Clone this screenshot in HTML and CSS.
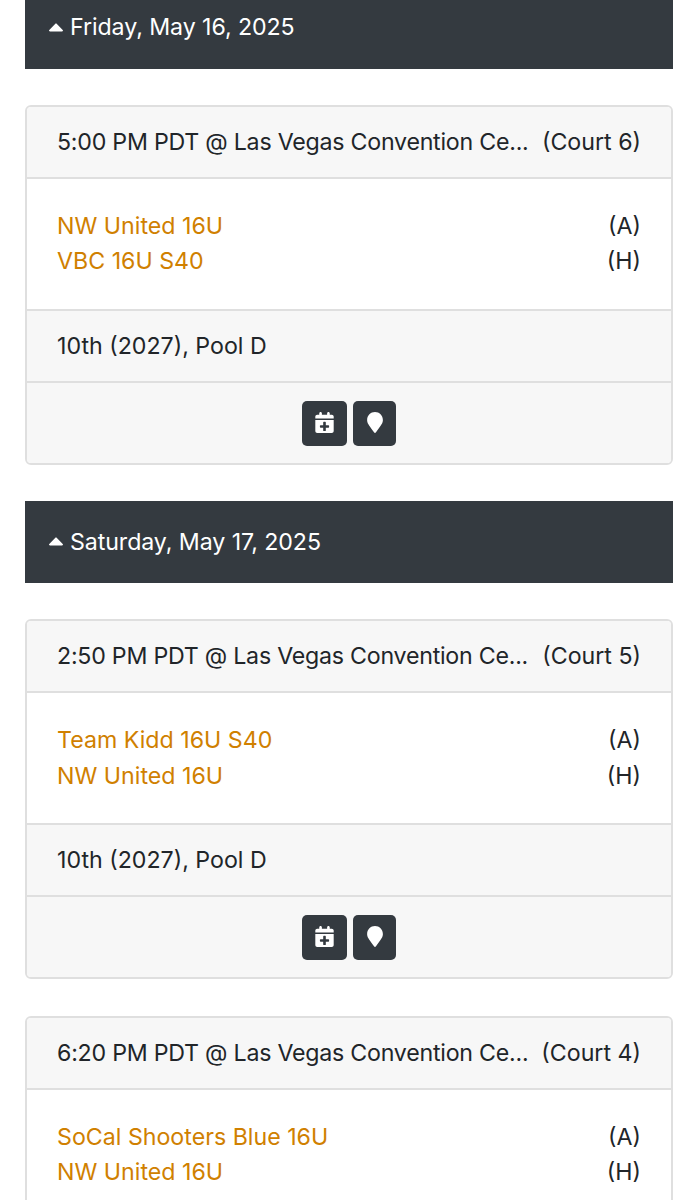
FILE: index.html
```
<!DOCTYPE html>
<html lang="en">
<head>
  <meta charset="UTF-8">
  <meta name="viewport" content="width=device-width, initial-scale=1.0">
  <title>Schedule</title>
  <link rel="stylesheet" href="styles.css">
</head>
<body>
  <svg class="icon-defs" width="0" height="0">
    <symbol id="calendar-plus" viewBox="0 0 448 512">
      <path fill-rule="evenodd" d="M0 192h448v272c0 26.500-21.500 48-48 48H48c-26.500 0-48-21.500-48-48V192zm192 64v64h-64c-9 0-16 7-16 16v32c0 9 7 16 16 16h64v64c0 9 7 16 16 16h32c9 0 16-7 16-16v-64h64c9 0 16-7 16-16v-32c0-9-7-16-16-16h-64v-64c0-9-7-16-16-16h-32c-9 0-16 7-16 16z"/>
      <path d="M448 112v48H0v-48c0-26.500 21.500-48 48-48h48V32c0-18 14-32 32-32s32 14 32 32v32h128V32c0-18 14-32 32-32s32 14 32 32v32h48c26.500 0 48 21.500 48 48z"/>
    </symbol>
    <symbol id="map-marker" viewBox="0 0 384 512">
      <path d="M172.300 501.700C27 291 0 269.400 0 192 0 86 86 0 192 0s192 86 192 192c0 77.400-27 99-172.300 309.700-9.500 13.700-29.900 13.700-39.400 0z"/>
    </symbol>
    <symbol id="caret-up" viewBox="0 0 14 9">
      <path d="M1 8.500h12c.9 0 1.300-1 .7-1.600L7.900.9c-.5-.5-1.300-.5-1.800 0L.3 6.900C-.3 7.500.1 8.500 1 8.500z"/>
    </symbol>
  </svg>

  <main class="schedule">
    <h2 class="day-bar"><svg class="caret"><use href="#caret-up"/></svg><span>Friday, May 16, 2025</span></h2>

    <section class="card">
      <div class="card-header">
        <span class="venue">5:00 PM PDT @ Las Vegas Convention Ce...</span>
        <span class="court">(Court 6)</span>
      </div>
      <div class="card-body">
        <div class="team"><a href="#">NW United 16U</a><span>(A)</span></div>
        <div class="team"><a href="#">VBC 16U S40</a><span>(H)</span></div>
      </div>
      <div class="card-division">10th (2027), Pool D</div>
      <div class="card-footer">
        <button class="btn btn-calendar" aria-label="Add to calendar"><svg><use href="#calendar-plus"/></svg></button>
        <button class="btn btn-map" aria-label="Map"><svg><use href="#map-marker"/></svg></button>
      </div>
    </section>

    <h2 class="day-bar"><svg class="caret"><use href="#caret-up"/></svg><span>Saturday, May 17, 2025</span></h2>

    <section class="card">
      <div class="card-header">
        <span class="venue">2:50 PM PDT @ Las Vegas Convention Ce...</span>
        <span class="court">(Court 5)</span>
      </div>
      <div class="card-body">
        <div class="team"><a href="#">Team Kidd 16U S40</a><span>(A)</span></div>
        <div class="team"><a href="#">NW United 16U</a><span>(H)</span></div>
      </div>
      <div class="card-division">10th (2027), Pool D</div>
      <div class="card-footer">
        <button class="btn btn-calendar" aria-label="Add to calendar"><svg><use href="#calendar-plus"/></svg></button>
        <button class="btn btn-map" aria-label="Map"><svg><use href="#map-marker"/></svg></button>
      </div>
    </section>

    <section class="card">
      <div class="card-header">
        <span class="venue">6:20 PM PDT @ Las Vegas Convention Ce...</span>
        <span class="court">(Court 4)</span>
      </div>
      <div class="card-body">
        <div class="team"><a href="#">SoCal Shooters Blue 16U</a><span>(A)</span></div>
        <div class="team"><a href="#">NW United 16U</a><span>(H)</span></div>
      </div>
    </section>
  </main>
</body>
</html>
```
FILE: styles.css
```
* {
  box-sizing: border-box;
}
body {
  margin: 0;
  height: 1200px;
  overflow: hidden;
  background: #fff;
  color: #212529;
  font-family: Inter, "Liberation Sans", sans-serif;
  font-size: 23.2px;
  line-height: 35.4px;
}
.icon-defs {
  display: none;
}
.schedule {
  margin-top: -13.3px;
  padding: 0 25px;
}
.day-bar {
  display: flex;
  align-items: center;
  gap: 7px;
  height: 82.3px;
  margin: 0 0 35.9px;
  padding: 0 24px;
  background: #343a40;
  color: #fff;
  font-size: inherit;
  font-weight: 400;
  letter-spacing: -0.08px;
}
.caret {
  width: 14px;
  height: 9px;
  margin-bottom: 1px;
  fill: #fff;
}
.card {
  margin-bottom: 36.3px;
  border: 2px solid #dfdfdf;
  border-radius: 6px;
  background: #fff;
  overflow: hidden;
}
.card-header,
.card-division {
  height: 72px;
  padding: 18px 30px 0;
  background: #f7f7f7;
}
.card-header {
  display: flex;
  justify-content: space-between;
  border-bottom: 2px solid #dfdfdf;
  white-space: nowrap;
}
.venue {
  letter-spacing: -0.24px;
}
.card-body {
  height: 130px;
  padding: 30px 30px 0;
}
.team {
  display: flex;
  justify-content: space-between;
}
.team a {
  color: #d08000;
  text-decoration: none;
}
.card-division {
  border-top: 2px solid #dfdfdf;
}
.card-footer {
  display: flex;
  justify-content: center;
  gap: 6px;
  height: 82px;
  padding-top: 18px;
  border-top: 2px solid #dfdfdf;
  background: #f7f7f7;
}
.btn {
  display: flex;
  align-items: center;
  justify-content: center;
  height: 45px;
  padding: 0 0 2px;
  border: 0;
  border-radius: 5px;
  background: #343a40;
  color: #fff;
}
.btn svg {
  height: 21px;
  fill: currentColor;
}
.btn-calendar {
  width: 45px;
}
.btn-calendar svg {
  width: 19px;
}
.btn-map {
  width: 43px;
}
.btn-map svg {
  width: 16px;
}
```
